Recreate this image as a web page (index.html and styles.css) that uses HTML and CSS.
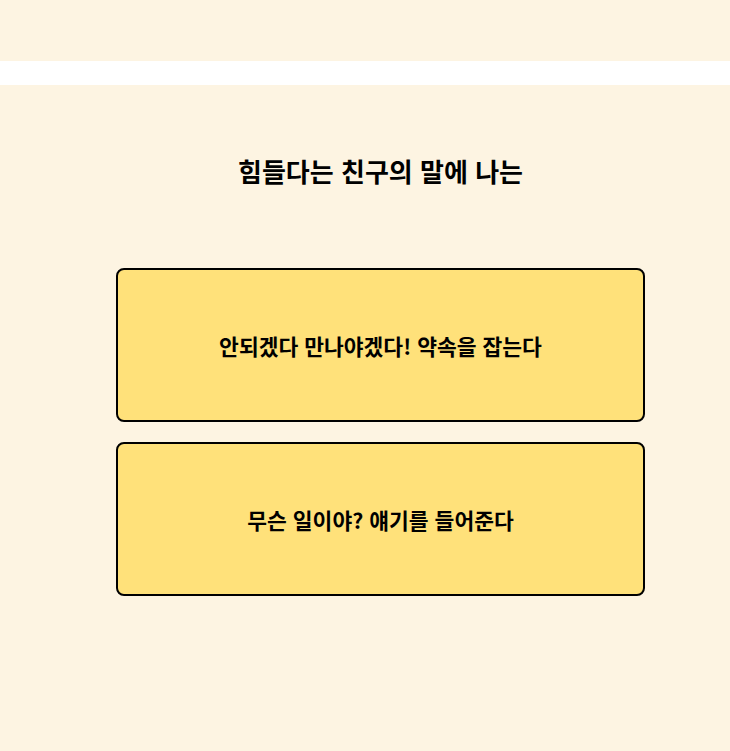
FILE: index.html
```html
<!DOCTYPE html>
<html lang="ko">
<head>
    <meta charset="utf-8">
    <title>심리 테스트</title>
    <link rel="stylesheet" href="styles.css">
</head>
<body>
    <div class="top"></div>
    <div class="band"></div>
    <div class="content">
        <h1 class="question">힘들다는 친구의 말에 나는</h1>
        <div class="answers">
            <button class="answer">안되겠다 만나야겠다! 약속을 잡는다</button>
            <button class="answer">무슨 일이야? 얘기를 들어준다</button>
        </div>
    </div>
</body>
</html>
```

FILE: styles.css
```css
body {
    margin: 0;
    background-color: #fdf4e2;
    font-family: "Noto Sans CJK KR", "Noto Sans", sans-serif;
}
.top {
    height: 61px;
}
.band {
    height: 24px;
    background-color: #fff;
}
.content {
    width: 529px;
    margin-left: 116px;
    padding-top: 69px;
}
.question {
    margin: 0 0 80px;
    font-size: 26px;
    line-height: 34px;
    font-weight: bold;
    text-align: center;
    color: #000;
}
.answers {
    display: flex;
    flex-direction: column;
    gap: 20px;
}
.answer {
    height: 154px;
    width: 100%;
    background-color: #ffe17a;
    border: 2px solid #000;
    border-radius: 8px;
    font-family: inherit;
    font-size: 21.5px;
    font-weight: bold;
    color: #000;
    cursor: pointer;
}
```
